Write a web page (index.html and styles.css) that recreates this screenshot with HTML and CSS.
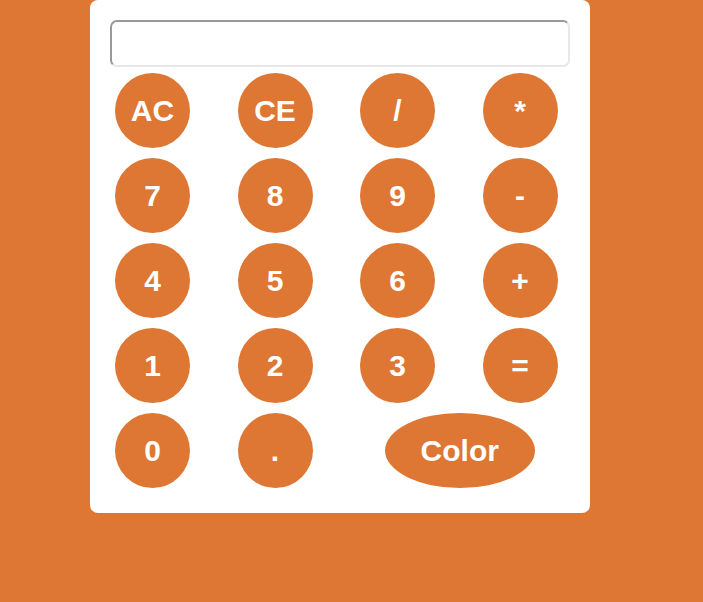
FILE: index.html
```html
<!DOCTYPE html>
<html>
<head>
<meta charset="utf-8">
<link rel="stylesheet" href="styles.css">
</head>
<body>
<div class="calc">
  <input class="display" type="text">
  <div class="keys">
    <button class="key">AC</button>
    <button class="key">CE</button>
    <button class="key">/</button>
    <button class="key">*</button>
    <button class="key">7</button>
    <button class="key">8</button>
    <button class="key">9</button>
    <button class="key">-</button>
    <button class="key">4</button>
    <button class="key">5</button>
    <button class="key">6</button>
    <button class="key">+</button>
    <button class="key">1</button>
    <button class="key">2</button>
    <button class="key">3</button>
    <button class="key">=</button>
    <button class="key">0</button>
    <button class="key">.</button>
    <button class="key wide">Color</button>
  </div>
</div>
</body>
</html>
```
FILE: styles.css
```css
html, body {
  margin: 0;
  padding: 0;
  background: #dd7733;
  font-family: "Liberation Sans", Arial, sans-serif;
}
.calc {
  box-sizing: border-box;
  width: 500px;
  margin-left: 90px;
  padding: 20px 20px 25px 20px;
  background: #ffffff;
  border-radius: 8px;
}
.display {
  display: block;
  box-sizing: border-box;
  width: 460px;
  height: 47px;
  margin: 0;
  border: 2px solid;
  border-color: #999999 #e8e8e8 #e8e8e8 #999999;
  border-radius: 7px;
  background: #fff;
  font-family: inherit;
  font-size: 24px;
  outline: none;
}
.keys {
  display: grid;
  grid-template-columns: repeat(4, 75px);
  grid-auto-rows: 75px;
  column-gap: 47.5px;
  row-gap: 10px;
  margin-top: 6px;
  padding-left: 5px;
}
.key {
  width: 75px;
  height: 75px;
  margin: 0;
  padding: 0;
  border: none;
  border-radius: 50%;
  background: #dd7733;
  color: #ffffff;
  font-family: "Liberation Sans", Arial, sans-serif;
  font-weight: bold;
  font-size: 30px;
  cursor: pointer;
}
.key.wide {
  grid-column: 3 / 5;
  justify-self: center;
  width: 150px;
  margin-left: 2px;
}
```
